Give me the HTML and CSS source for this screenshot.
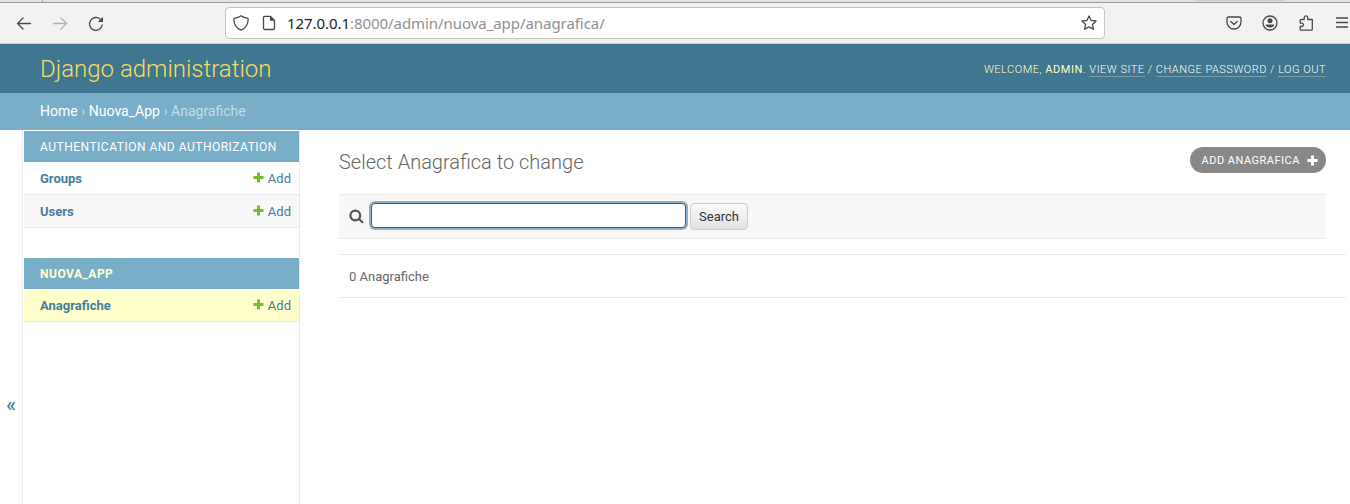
FILE: index.html
```html
<!DOCTYPE html>
<html lang="en">
<head>
<meta charset="utf-8">
<title>Select Anagrafica to change | Django site admin</title>
<link rel="stylesheet" href="styles.css">
</head>
<body>
<div class="browser">
  <div class="tab-strip"><span class="tab-edge"></span><span class="tab-shadow"></span></div>
  <div class="toolbar">
    <div class="nav-buttons">
      <svg class="icon" width="16" height="16" viewBox="0 0 16 16"><path d="M14.500 7.500h-13M7 2L1.500 7.500 7 13"/></svg>
      <svg class="icon disabled" width="16" height="16" viewBox="0 0 16 16"><path d="M1.500 7.500h13M9 2l5.500 5.500L9 13"/></svg>
      <svg class="icon" width="16" height="16" viewBox="0 0 16 16"><path d="M14.200 9A6.400 6.400 0 1 1 12.500 3.400"/><path class="solid" d="M15 .8V6H9.800z"/></svg>
    </div>
    <div class="url-bar">
      <svg class="icon" width="16" height="16" viewBox="0 0 16 16"><path d="M8 .8C6.300 2.200 4 3 1.600 3.200c-.6 0-.8.400-.8.900C.9 8.800 3.300 13.400 8 15.200c4.700-1.800 7.100-6.400 7.200-11.100 0-.5-.2-.9-.8-.9C12 3 9.700 2.200 8 .8z"/></svg>
      <svg class="icon page-icon" width="16" height="16" viewBox="0 0 16 16"><path d="M3.500 1.300h5.800l4.200 4.200v7.700a1.300 1.300 0 0 1-1.300 1.300H3.800a1.300 1.300 0 0 1-1.300-1.300V2.300a1 1 0 0 1 1-1z"/><path class="solid" d="M9 1v4.800h5z"/></svg>
      <span class="url"><b>127.0.0.1</b>:8000/admin/nuova_app/anagrafica/</span>
      <svg class="icon star" width="16" height="16" viewBox="0 0 16 16"><path d="M8 .9l2.100 4.500 5 .6-3.700 3.400 1 4.900L8 11.900l-4.400 2.400 1-4.900L.9 6l5-.6z"/></svg>
    </div>
    <div class="tool-buttons">
      <svg class="icon" width="16" height="16" viewBox="0 0 16 16"><path d="M2.500 2h11a1.500 1.500 0 0 1 1.500 1.500V7A7 7 0 0 1 1 7V3.500A1.500 1.500 0 0 1 2.500 2z"/><path d="M4.800 6.500L8 9.500l3.200-3"/></svg>
      <svg class="icon" width="16" height="16" viewBox="0 0 16 16"><circle cx="8" cy="8" r="7"/><circle class="solid" cx="8" cy="5.800" r="2.500"/><path class="solid" d="M3.700 9.500h8.600c0 1.800-2 3-4.300 3s-4.300-1.200-4.300-3z"/></svg>
      <svg class="icon" width="16" height="16" viewBox="0 0 16 16"><path d="M1.200 5.500a1 1 0 0 1 1-1h3V2.700a1.800 1.800 0 0 1 3.600 0v1.800h4.500v9.700a1 1 0 0 1-1 1H2.200a1 1 0 0 1-1-1v-2.700h1.600a1.700 1.700 0 0 0 0-3.400H1.200z"/></svg>
      <svg class="icon menu" width="14" height="16" viewBox="0 0 14 16"><path d="M1 3h12M1 7.500h12M1 12h12"/></svg>
    </div>
  </div>
</div>

<header class="header">
  <div class="site-name">Django administration</div>
  <div class="user-tools">Welcome, <strong>admin</strong>. <a>View site</a> / <a>Change password</a> / <a>Log out</a></div>
</header>
<nav class="breadcrumbs"><a>Home</a> › <a>Nuova_App</a> › Anagrafiche</nav>

<div class="main">
  <div class="toggle">«</div>
  <aside class="sidebar">
    <section class="module">
      <h2 class="caption">Authentication and Authorization</h2>
      <div class="model"><strong>Groups</strong><a class="add"><svg width="11" height="11" viewBox="0 0 11 11"><path d="M4 .5h3V4h3.500v3H7v3.500H4V7H.5V4H4z"/></svg>Add</a></div>
      <div class="model alt"><strong>Users</strong><a class="add"><svg width="11" height="11" viewBox="0 0 11 11"><path d="M4 .5h3V4h3.500v3H7v3.500H4V7H.5V4H4z"/></svg>Add</a></div>
    </section>
    <section class="module current">
      <h2 class="caption">Nuova_App</h2>
      <div class="model selected"><strong>Anagrafiche</strong><a class="add"><svg width="11" height="11" viewBox="0 0 11 11"><path d="M4 .5h3V4h3.500v3H7v3.500H4V7H.5V4H4z"/></svg>Add</a></div>
    </section>
  </aside>
  <main class="content">
    <div class="title-row">
      <h1 class="title">Select Anagrafica to change</h1>
      <a class="add-button">Add Anagrafica<svg width="11" height="11" viewBox="0 0 11 11"><path d="M4 .5h3V4h3.500v3H7v3.500H4V7H.5V4H4z"/></svg></a>
    </div>
    <form class="search">
      <svg class="magnifier" width="15" height="15" viewBox="0 0 15 15"><circle cx="6.300" cy="6.500" r="4.900"/><path d="M10 10l3.400 3.200"/></svg>
      <input class="query" type="text" aria-label="Search">
      <button class="submit" type="button">Search</button>
    </form>
    <p class="paginator">0 Anagrafiche</p>
  </main>
</div>
</body>
</html>
```
FILE: styles.css
```css
* { box-sizing: border-box; }
body {
  margin: 0;
  height: 504px;
  overflow: hidden;
  display: flex;
  flex-direction: column;
  background: #fff;
  color: #666;
  font: 13px Roboto, "Liberation Sans", sans-serif;
}

/* Browser toolbar */
.browser { height: 44px; flex: none; background: #f2f2f2; border-bottom: 1px solid #ccc; }
.tab-strip { height: 3px; display: flex; justify-content: space-between; background: #e3e3e3; border-bottom: 1px solid #999; }
.tab-edge { width: 43px; border-right: 1px solid #aaa; }
.tab-shadow { width: 90px; margin-right: 66px; background: #ccc; height: 1px; }
.toolbar { height: 40px; display: flex; align-items: center; }
.icon { flex: none; fill: none; stroke: #4a4a4a; stroke-width: 1.3; stroke-linecap: round; stroke-linejoin: round; }
.icon .solid { fill: #4a4a4a; stroke: none; }
.disabled { stroke: #b0b0b0; }
.nav-buttons { width: 225px; padding: 1px 0 0 16px; display: flex; gap: 20px; }
.url-bar {
  width: 880px;
  height: 32px;
  padding-left: 7px;
  display: flex;
  align-items: center;
  background: #fff;
  border: 1px solid #c4c4c4;
  border-radius: 4px;
}
.page-icon { margin-left: 12px; }
.url { margin-left: 10px; font: 15px "Noto Sans", sans-serif; color: #909090; white-space: nowrap; letter-spacing: -.06px; }
.url b { font-weight: 400; color: #222; }
.star { margin: 0 7px 0 auto; }
.tool-buttons { flex: 1; padding-left: 121px; display: flex; gap: 20px; }
.tool-buttons .icon + .icon { margin-left: .3px; }
.menu { stroke-linecap: butt; }

/* Site header */
.header {
  height: 49px;
  flex: none;
  padding: 0 24px 0 40px;
  display: flex;
  align-items: center;
  justify-content: space-between;
  background: #417690;
  color: #ffc;
}
.site-name { padding-top: 2px; font-size: 24px; font-weight: 300; color: #f5dd5d; line-height: 49px; }
.user-tools { font-size: 11px; font-weight: 300; letter-spacing: .5px; text-transform: uppercase; padding-top: 1px; white-space: nowrap; }
.user-tools strong { font-weight: 400; letter-spacing: .6px; }
.user-tools a { color: #fff; border-bottom: 1px solid rgba(255,255,255,.28); }
.breadcrumbs { height: 37px; flex: none; padding-left: 40px; line-height: 36px; font-size: 14px; background: #79aec8; color: #c4dce8; }
.breadcrumbs a { color: #fff; }

/* Main area */
.main { flex: 1; display: flex; min-height: 0; }
.toggle { width: 22px; display: flex; align-items: center; justify-content: center; padding-bottom: 3px; margin-top: 175px; height: 200px; font-size: 20px; font-weight: 500; color: #447e9b; }
.sidebar { width: 278px; padding: 1px 0 0 1px; border: solid #eaeaea; border-width: 0 1px; }
.module { margin-bottom: 30px; }
.caption { margin: 0; height: 31px; padding: 1px 0 0 16px; line-height: 31px; font-size: 12px; font-weight: 400; letter-spacing: .5px; text-transform: uppercase; color: #fff; background: #79aec8; }
.current .caption { font-weight: 700; color: #ffc; }
.model { height: 33px; padding: 0 8px 0 16px; display: flex; align-items: center; justify-content: space-between; border-bottom: 1px solid #eaeaea; color: #447e9b; }
.alt { background: #f8f8f8; }
.selected { background: #ffc; }
.add { display: flex; align-items: center; gap: 4px; }
.add svg { fill: #70bf2b; margin-top: -2px; }
.content { flex: 1; padding: 17px 4px 0 39px; }
.title-row { height: 47px; margin-right: 20px; display: flex; align-items: flex-start; justify-content: space-between; }
.title { margin: 0; font-size: 20px; font-weight: 300; line-height: 30px; }
.add-button {
  width: 136px;
  height: 26px;
  padding-left: 11.5px;
  display: flex;
  align-items: center;
  gap: 7.5px;
  border-radius: 13px;
  background: #888;
  color: #fff;
  font-size: 11px;
  letter-spacing: .5px;
  text-transform: uppercase;
  white-space: nowrap;
}
.add-button svg { fill: #fff; flex: none; }
.search { height: 45px; margin: 0 20px 15px 0; padding-left: 10px; display: flex; align-items: center; background: #f8f8f8; border: solid #eaeaea; border-width: 1px 0; }
.magnifier { fill: none; stroke: #555; stroke-width: 2.2; stroke-linecap: round; }
.query { width: 315px; height: 25px; margin: 0 4px 2px 7px; border: 1px solid #4c5a66; border-radius: 4px; box-shadow: 0 0 0 2px #8ab0d0; outline: none; background: #fff; }
.submit { width: 58px; height: 27px; padding: 0; border: 1px solid #ccc; border-radius: 4px; background: linear-gradient(#fafafa, #e2e2e2); color: #333; font: 13px Roboto, sans-serif; }
.paginator { margin: 0; height: 44px; padding-left: 10px; line-height: 43px; border: solid #eaeaea; border-width: 1px 0; }
```
